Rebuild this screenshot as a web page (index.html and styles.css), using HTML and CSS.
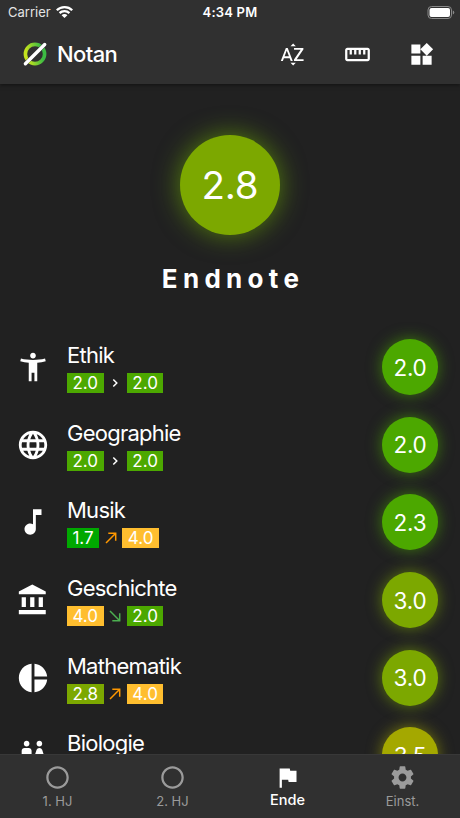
FILE: index.html
```html
<!DOCTYPE html>
<html lang="de">
<head>
<meta charset="utf-8">
<title>Notan</title>
<link rel="stylesheet" href="styles.css">
</head>
<body>
<div class="app">
  <header class="top">
    <div class="status">
      <div class="carrier"><span>Carrier</span>
        <svg class="wifi" viewBox="0 0 17 12"><path d="M8.500 0C5.200 0 2.200 1.300 0 3.400L1.600 5a9.800 9.800 0 0 1 13.800 0L17 3.400A12.200 12.200 0 0 0 8.500 0zM8.500 4.100C6.300 4.100 4.300 5 2.800 6.300l1.600 1.600a5.900 5.900 0 0 1 8.200 0l1.600-1.600A8.300 8.300 0 0 0 8.500 4.100zM8.500 8a4 4 0 0 0-2.900 1.200L8.500 12l2.900-2.800A4 4 0 0 0 8.500 8z"/></svg>
      </div>
      <span class="time">4:34 PM</span>
      <div class="power"><svg class="battery" viewBox="0 0 27 13"><rect x=".5" y=".5" width="23.500" height="12" rx="3.500" fill="none" stroke="#888"/><rect x="2" y="2" width="20.500" height="9" rx="2"/><path d="M25.300 4.500v4q1.500-.6 1.500-2t-1.500-2z" fill="#888"/></svg></div>
    </div>
    <div class="toolbar">
      <svg class="logo" viewBox="0 0 26 26"><defs><linearGradient id="ring" x1="0" y1=".6" x2="1" y2=".4"><stop offset=".1" stop-color="#c3e21d"/><stop offset=".85" stop-color="#3cbb43"/></linearGradient></defs><circle cx="13" cy="13" r="9.600" fill="none" stroke="url(#ring)" stroke-width="3.600"/><path d="M3.400 22.700L22.700 3.500" stroke="#303030" stroke-width="4"/><path d="M3.400 22.700L22.700 3.500" stroke="#fff" stroke-width="3.400" stroke-linecap="round"/></svg>
      <h1 class="brand">Notan</h1>
      <nav class="actions">
        <svg class="action" viewBox="0 0 24 24"><path d="M14.940 4.660h-4.720l2.360-2.360zm-4.690 14.710h4.660l-2.330 2.330zM6.100 6.270L1.600 17.730h1.840l.92-2.450h5.110l.92 2.450h1.840L7.740 6.270H6.100zm-1.130 7.370l1.940-5.180 1.940 5.180H4.970zm10.760 2.500h6.120v1.590h-8.530v-1.290l5.920-8.560h-5.880v-1.600h8.300v1.260l-5.930 8.600z"/></svg>
        <svg class="action" viewBox="0 0 24 24"><path d="M21 6H3c-1.100 0-2 .9-2 2v8c0 1.100.9 2 2 2h18c1.100 0 2-.9 2-2V8c0-1.100-.9-2-2-2zm0 10H3V8h2v4h2V8h2v4h2V8h2v4h2V8h2v4h2V8h2v8z"/></svg>
        <svg class="action" viewBox="0 0 24 24"><path d="M13 13v8h8v-8h-8zM3 21h8v-8H3v8zM3 3v8h8V3H3zm13.660-1.310L11 7.340 16.660 13l5.660-5.660-5.660-5.650z"/></svg>
      </nav>
    </div>
  </header>
  <main class="content">
    <section class="summary">
      <div class="grade grade-large olive">2.8</div>
      <h2 class="caption">Endnote</h2>
    </section>
    <ul class="subjects">
      <li class="subject">
        <svg class="symbol" viewBox="0 0 24 24"><path d="M20.500 6c-2.610.7-5.670 1-8.500 1s-5.890-.3-8.500-1L3 8c1.860.5 4 .83 6 1v13h2v-6h2v6h2V9c2-.17 4.140-.5 6-1l-.5-2zM12 6c1.100 0 2-.9 2-2s-.9-2-2-2-2 .9-2 2 .9 2 2 2z"/></svg>
        <div class="info"><span class="name">Ethik</span><div class="trend"><span class="tag green">2.0</span><svg class="arrow" viewBox="0 0 14 14"><path d="M5.300 3.500L8.800 7l-3.500 3.500"/></svg><span class="tag green">2.0</span></div></div>
        <div class="grade green">2.0</div>
      </li>
      <li class="subject">
        <svg class="symbol" viewBox="0 0 24 24"><path d="M11.990 2C6.470 2 2 6.480 2 12s4.470 10 9.990 10C17.520 22 22 17.520 22 12S17.520 2 11.990 2zm6.930 6h-2.950c-.32-1.250-.78-2.450-1.380-3.560 1.840.63 3.370 1.910 4.330 3.560zM12 4.040c.83 1.200 1.480 2.530 1.910 3.960h-3.820c.43-1.430 1.080-2.760 1.910-3.960zM4.260 14C4.100 13.360 4 12.690 4 12s.1-1.360.26-2h3.380c-.08.66-.14 1.320-.14 2 0 .68.06 1.340.14 2H4.260zm.82 2h2.950c.32 1.250.78 2.450 1.380 3.560-1.840-.63-3.370-1.900-4.330-3.560zm2.950-8H5.080c.96-1.660 2.490-2.930 4.330-3.560C8.810 5.550 8.350 6.750 8.030 8zM12 19.960c-.83-1.200-1.480-2.530-1.910-3.960h3.820c-.43 1.430-1.080 2.760-1.910 3.960zM14.340 14H9.660c-.09-.66-.16-1.320-.16-2 0-.68.07-1.350.16-2h4.680c.09.65.16 1.320.16 2 0 .68-.07 1.340-.16 2zm.25 5.560c.6-1.110 1.060-2.310 1.380-3.560h2.950c-.96 1.650-2.490 2.930-4.330 3.560zM16.360 14c.08-.66.14-1.320.14-2 0-.68-.06-1.340-.14-2h3.380c.16.64.26 1.310.26 2s-.1 1.360-.26 2h-3.380z"/></svg>
        <div class="info"><span class="name">Geographie</span><div class="trend"><span class="tag green">2.0</span><svg class="arrow" viewBox="0 0 14 14"><path d="M5.300 3.500L8.800 7l-3.500 3.500"/></svg><span class="tag green">2.0</span></div></div>
        <div class="grade green">2.0</div>
      </li>
      <li class="subject">
        <svg class="symbol" viewBox="0 0 24 24"><path d="M12 3v10.550c-.59-.34-1.270-.55-2-.55-2.210 0-4 1.790-4 4s1.790 4 4 4 4-1.790 4-4V7h4V3h-6z"/></svg>
        <div class="info"><span class="name">Musik</span><div class="trend"><span class="tag tag-narrow emerald">1.7</span><svg class="arrow worse" viewBox="0 0 14 14"><path d="M2 12L11.700 2.300M4.300 2.300h7.400v7.400"/></svg><span class="tag amber">4.0</span></div></div>
        <div class="grade green">2.3</div>
      </li>
      <li class="subject">
        <svg class="symbol" viewBox="0 0 24 24"><path d="M4 10v7h3v-7H4zm6 0v7h3v-7h-3zM2 22h19v-3H2v3zm14-12v7h3v-7h-3zm-4.500-9L2 6v2h19V6l-9.500-5z"/></svg>
        <div class="info"><span class="name">Geschichte</span><div class="trend"><span class="tag amber">4.0</span><svg class="arrow better" viewBox="0 0 14 14"><path d="M2 2l9.700 9.700M4.300 11.700h7.400V4.300"/></svg><span class="tag green">2.0</span></div></div>
        <div class="grade olive">3.0</div>
      </li>
      <li class="subject">
        <svg class="symbol" viewBox="0 0 24 24"><path d="M11 2v20c-5.070-.5-9-4.790-9-10s3.930-9.500 9-10zm2.030 0v8.990H22c-.47-4.740-4.240-8.520-8.970-8.990zm0 11.010V22c4.740-.47 8.500-4.250 8.970-8.990h-8.970z"/></svg>
        <div class="info"><span class="name">Mathematik</span><div class="trend"><span class="tag olive-tag">2.8</span><svg class="arrow worse" viewBox="0 0 14 14"><path d="M2 12L11.700 2.300M4.300 2.300h7.400v7.400"/></svg><span class="tag amber">4.0</span></div></div>
        <div class="grade olive">3.0</div>
      </li>
      <li class="subject">
        <svg class="symbol" viewBox="0 0 24 24"><path d="M5.500 22v-7.500H4V9c0-1.100.9-2 2-2h3c1.100 0 2 .9 2 2v5.500H9.500V22h-4zM18 22v-6h3l-2.540-7.630C18.180 7.550 17.420 7 16.560 7h-.12c-.86 0-1.630.55-1.900 1.370L12 16h3v6h3zM7.500 6c1.110 0 2-.89 2-2s-.89-2-2-2-2 .89-2 2 .89 2 2 2zm9 0c1.110 0 2-.89 2-2s-.89-2-2-2-2 .89-2 2 .89 2 2 2z"/></svg>
        <div class="info"><span class="name">Biologie</span></div>
        <div class="grade mustard">3.5</div>
      </li>
    </ul>
  </main>
  <nav class="tabs">
    <div class="tab"><svg class="tab-icon" viewBox="0 0 24 24"><path d="M12 2C6.480 2 2 6.480 2 12s4.480 10 10 10 10-4.480 10-10S17.520 2 12 2zm0 18c-4.410 0-8-3.590-8-8s3.590-8 8-8 8 3.590 8 8-3.590 8-8 8z"/></svg><span class="tab-label">1. HJ</span></div>
    <div class="tab"><svg class="tab-icon" viewBox="0 0 24 24"><path d="M12 2C6.480 2 2 6.480 2 12s4.480 10 10 10 10-4.480 10-10S17.520 2 12 2zm0 18c-4.410 0-8-3.590-8-8s3.590-8 8-8 8 3.590 8 8-3.590 8-8 8z"/></svg><span class="tab-label">2. HJ</span></div>
    <div class="tab active"><svg class="tab-icon" viewBox="0 0 24 24"><path d="M14.400 6L14 4H5v17h2v-7h5.600l.4 2h7V6z"/></svg><span class="tab-label">Ende</span></div>
    <div class="tab"><svg class="tab-icon" viewBox="0 0 24 24"><path d="M19.430 12.980c.04-.32.07-.64.07-.98s-.03-.66-.07-.98l2.110-1.650c.19-.15.24-.42.12-.64l-2-3.460c-.12-.22-.39-.3-.61-.22l-2.490 1c-.52-.4-1.080-.73-1.690-.98l-.38-2.650C14.460 2.180 14.250 2 14 2h-4c-.25 0-.46.18-.49.42l-.38 2.650c-.61.25-1.170.59-1.690.98l-2.490-1c-.23-.09-.49 0-.61.22l-2 3.460c-.13.22-.07.49.12.64l2.110 1.650c-.04.32-.07.65-.07.98s.03.66.07.98l-2.110 1.650c-.19.15-.24.42-.12.64l2 3.460c.12.22.39.3.61.22l2.490-1c.52.4 1.080.73 1.690.98l.38 2.650c.03.24.24.42.49.42h4c.25 0 .46-.18.49-.42l.38-2.650c.61-.25 1.170-.59 1.690-.98l2.490 1c.23.09.49 0 .61-.22l2-3.460c.12-.22.07-.49-.12-.64l-2.110-1.650zM12 15.500c-1.930 0-3.500-1.570-3.500-3.500s1.570-3.500 3.500-3.500 3.500 1.570 3.500 3.500-1.570 3.500-3.500 3.500z"/></svg><span class="tab-label">Einst.</span></div>
  </nav>
</div>
</body>
</html>
```
FILE: styles.css
```css
* { box-sizing: border-box; }
body { margin: 0; background: #212121; color: #fff; font-family: Inter, "Liberation Sans", sans-serif; }
svg { display: block; flex: none; fill: currentColor; }
.app { display: flex; flex-direction: column; height: 818px; width: 460px; overflow: hidden; }
.top { position: relative; z-index: 1; flex: none; height: 84px; background: #303030; box-shadow: 0 1px 4px rgba(0, 0, 0, .5); }
.status { display: grid; grid-template-columns: 1fr auto 1fr; align-items: center; height: 24px; padding: 0 5px 0 8px; font-size: 13px; }
.carrier { display: flex; align-items: center; gap: 5px; color: #e4e4e4; letter-spacing: 0; }
.wifi { width: 17px; height: 12px; color: #fff; margin-bottom: 1px; }
.time { margin-right: 3px; font-weight: 600; letter-spacing: .2px; }
.power { display: flex; justify-content: flex-end; }
.battery { width: 28px; height: 13px; }
.toolbar { display: flex; align-items: center; height: 60px; padding: 0 25px 0 22px; }
.logo { width: 26px; height: 26px; }
.brand { margin: 0 0 0 9px; font-size: 22px; font-weight: 500; letter-spacing: -.6px; }
.actions { display: flex; gap: 37.500px; margin-left: auto; }
.action { width: 27px; height: 27px; }
.content { flex: 1; min-height: 0; overflow: hidden; }
.summary { display: flex; flex-direction: column; align-items: center; height: 244.200px; padding-top: 51px; }
.grade { display: flex; align-items: center; justify-content: center; flex: none; width: 56px; height: 56px; border-radius: 50%; font-size: 22.500px; letter-spacing: -.2px; }
.grade-large { width: 100px; height: 100px; font-size: 38.500px; }
.caption { margin: 28px 0 0; padding-left: 6px; font-size: 26px; line-height: 32px; font-weight: 700; letter-spacing: 5.300px; }
.subjects { margin: 0; padding: 0; list-style: none; }
.subject { display: flex; align-items: center; height: 77.700px; padding: 0 22px 0 16px; }
.symbol { width: 34px; height: 34px; }
.info { flex: 1; height: 54px; margin-left: 17px; }
.name { display: block; height: 33px; font-size: 22px; line-height: 30px; letter-spacing: -.75px; }
.trend { display: flex; align-items: center; }
.tag { display: flex; align-items: center; justify-content: center; width: 36.500px; height: 20px; font-size: 17px; }
.tag-narrow { width: 32px; }
.arrow { width: 14px; height: 14px; margin: 0 4.700px; fill: none; stroke: currentColor; stroke-width: 1.500; }
.worse { color: #ff9800; }
.better { color: #4caf50; }
.green { background: #4ca800; }
.emerald { background: #00a800; }
.olive, .olive-tag { background: #7ca800; }
.amber { background: #ffbe2f; }
.mustard { background: #a4a800; }
.grade.green { box-shadow: 0 0 15px rgba(76, 168, 0, .65); }
.grade.olive { box-shadow: 0 0 15px rgba(124, 168, 0, .65); }
.grade.mustard { box-shadow: 0 0 15px rgba(164, 168, 0, .65); }
.grade-large.olive { box-shadow: 0 0 26px rgba(112, 178, 0, .65); }
.tabs { position: relative; z-index: 1; display: flex; flex: none; height: 64px; background: #303030; border-top: 1px solid #383838; }
.tab { display: flex; flex: 1; flex-direction: column; align-items: center; padding-top: 9px; color: #9b9b9b; font-size: 13px; }
.tab-icon { width: 27px; height: 27px; }
.tab-label { margin-top: 2px; line-height: 16px; letter-spacing: 0; }
.active { color: #fff; }
.active .tab-label { margin-top: 1px; font-size: 14.500px; font-weight: 500; }
```
